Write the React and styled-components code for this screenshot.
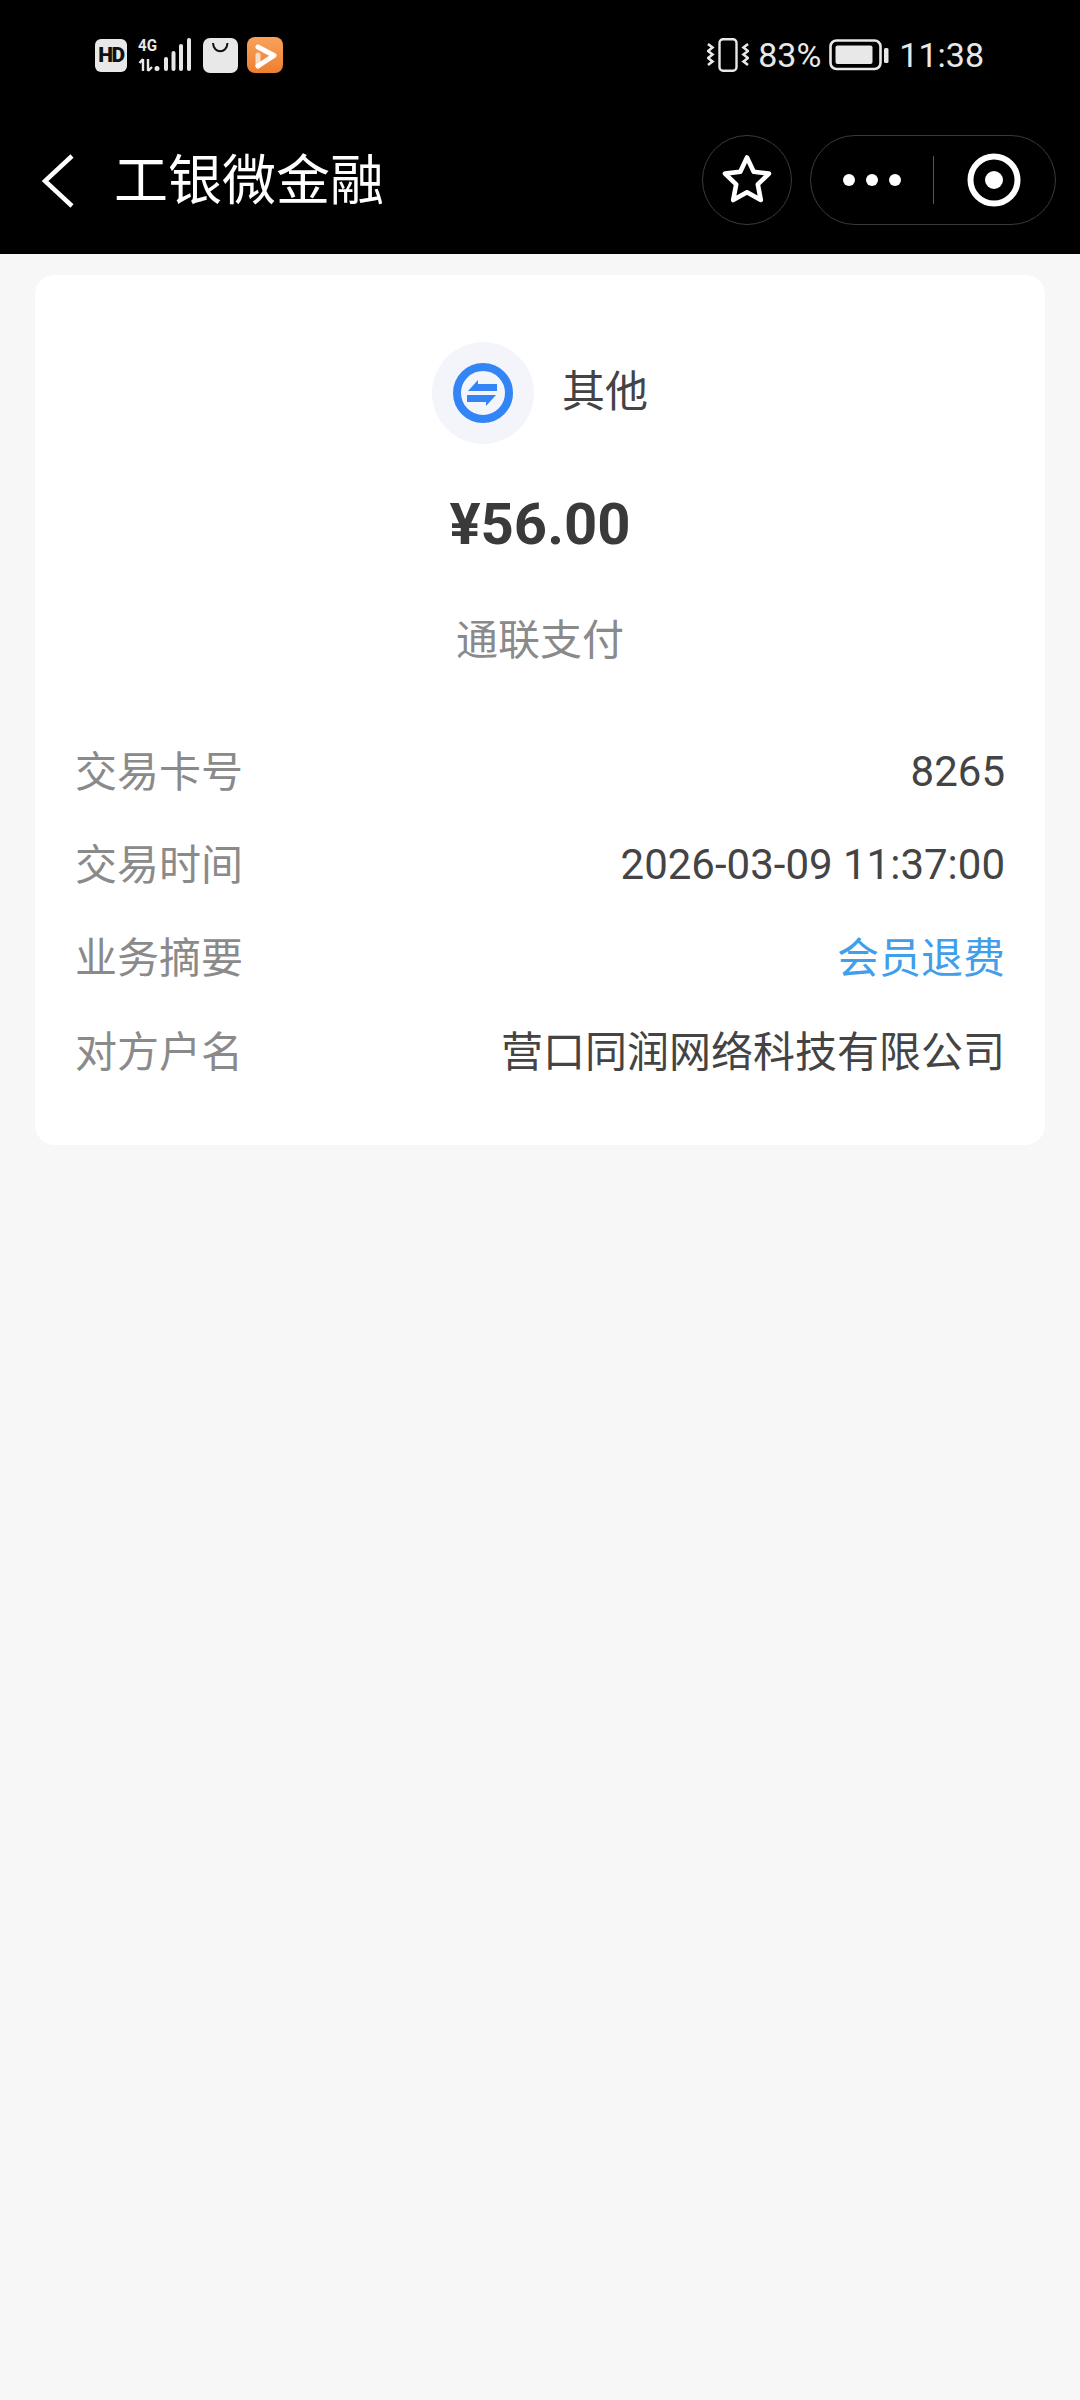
import React from "react";
import styled, { createGlobalStyle } from "styled-components";

const Global = createGlobalStyle`
  html, body { margin: 0; padding: 0; background: #f7f7f7; }
  body { font-family: Roboto, "Noto Sans CJK SC", sans-serif; }
`;

const Page = styled.div`
  width: 1080px;
  height: 2400px;
  background: #f7f7f7;
  overflow: hidden;
`;

const Header = styled.header`
  height: 254px;
  background: #000;
  display: flex;
  flex-direction: column;
`;

const StatusBar = styled.div`
  height: 110px;
  display: flex;
  align-items: center;
  justify-content: space-between;
  padding: 0 96px 0 95px;
  box-sizing: border-box;
`;

const LeftIcons = styled.div`
  display: flex;
  align-items: center;
  gap: 11px;
`;

const RightIcons = styled.div`
  display: flex;
  align-items: center;
`;

const HdBadge = styled.div`
  width: 32px;
  height: 33px;
  border-radius: 6px;
  background: #e8e8e8;
  color: #111;
  font: 900 21px/33px Roboto, sans-serif;
  letter-spacing: -1.5px;
  text-align: center;
`;

const StatusText = styled.span`
  color: #e8e8e8;
  font: 400 34px Roboto, sans-serif;
  line-height: 40px;
  margin: 0 ${(p) => p.$mr || 0}px 0 ${(p) => p.$ml || 0}px;
`;

const NavBar = styled.div`
  height: 144px;
  display: flex;
  align-items: center;
  padding: 0 24px 4px 40px;
  box-sizing: border-box;
`;

const Back = styled.svg`
  width: 36px;
  height: 56px;
  flex: none;
`;

const Title = styled.h1`
  margin: 0 0 6px 38px;
  flex: 1;
  color: #fff;
  font: 400 54px "Noto Sans CJK SC", sans-serif;
  line-height: 60px;
`;

const StarButton = styled.div`
  width: 90px;
  height: 90px;
  border-radius: 50%;
  border: 1px solid #3a3a3a;
  box-sizing: border-box;
  display: flex;
  align-items: center;
  justify-content: center;
  margin-right: 18px;
`;

const Capsule = styled.div`
  width: 246px;
  height: 90px;
  border-radius: 45px;
  border: 1px solid #3a3a3a;
  box-sizing: border-box;
  display: flex;
  align-items: center;
`;

const CapsuleCell = styled.div`
  flex: 1;
  height: 100%;
  display: flex;
  align-items: center;
  justify-content: center;
`;

const Divider = styled.div`
  width: 1px;
  height: 48px;
  background: #555;
`;

const Content = styled.main`
  padding: 21px 35px 0;
`;

const Card = styled.section`
  height: 870px;
  background: #fff;
  border-radius: 20px;
  box-sizing: border-box;
  padding: 67px 40px 0;
  display: flex;
  flex-direction: column;
`;

const Merchant = styled.div`
  display: flex;
  align-items: center;
  justify-content: center;
  gap: 28px;
`;

const IconCircle = styled.div`
  width: 102px;
  height: 102px;
  border-radius: 50%;
  background: #f3f5fa;
  display: flex;
  align-items: center;
  justify-content: center;
`;

const MerchantName = styled.span`
  color: #444;
  font: 400 43px "Noto Sans CJK SC", sans-serif;
  padding-bottom: 11px;
`;

const Amount = styled.div`
  margin-top: 46px;
  text-align: center;
  color: #3a3a3a;
  font: 700 58px/68px Roboto, sans-serif;
`;

const Channel = styled.div`
  margin-top: 54px;
  text-align: center;
  color: #8a8a8a;
  font: 400 42px/50px "Noto Sans CJK SC", sans-serif;
`;

const Rows = styled.div`
  margin-top: 59.5px;
  display: flex;
  flex-direction: column;
`;

const Row = styled.div`
  height: 93.4px;
  display: flex;
  align-items: center;
  justify-content: space-between;
`;

const Label = styled.span`
  color: #8a8a8a;
  font: 400 42px "Noto Sans CJK SC", sans-serif;
`;

const Value = styled.span`
  color: ${(p) => (p.$link ? "#409eea" : "#444")};
  font: 400 42px Roboto, "Noto Sans CJK SC", sans-serif;
  padding-top: ${(p) => (p.$numeric ? 6 : 0)}px;
`;

const SignalSvg = styled.svg`
  width: 54px;
  height: 40px;
  margin-top: -6px;
`;

const PlaySvg = styled.svg`
  width: 36px;
  height: 36px;
  margin-left: -2px;
`;

const rows = [
  { label: "交易卡号", value: "8265", numeric: true },
  { label: "交易时间", value: "2026-03-09 11:37:00", numeric: true },
  { label: "业务摘要", value: "会员退费", link: true },
  { label: "对方户名", value: "营口同润网络科技有限公司" },
];

const SignalIcon = () => (
  <SignalSvg viewBox="0 -6 54 40">
    <text x="0" y="13" fill="#e8e8e8" fontSize="17" fontWeight="700" fontFamily="Roboto, sans-serif" textLength="19" lengthAdjust="spacingAndGlyphs">4G</text>
    <path d="M5 21v12M5 21l-3.500 4M10 21v12M10 33l4-4" stroke="#e8e8e8" strokeWidth="2.400" fill="none" />
    <circle cx="19" cy="30.500" r="2.500" fill="#e8e8e8" />
    <rect x="26" y="19" width="4" height="14" rx="2" fill="#e8e8e8" />
    <rect x="33.500" y="13" width="4" height="20" rx="2" fill="#e8e8e8" />
    <rect x="41" y="6" width="4" height="27" rx="2" fill="#e8e8e8" />
    <rect x="49" y="0" width="4" height="33" rx="2" fill="#e8e8e8" />
  </SignalSvg>
);

const BagIcon = () => (
  <svg width="35" height="35" viewBox="0 0 35 35">
    <rect width="35" height="35" rx="7" fill="#e8e8e8" />
    <path d="M10 5c.5 11 14 11 14.500 0" stroke="#111" strokeWidth="2" fill="none" />
  </svg>
);

const PlayIcon = () => (
  <PlaySvg viewBox="0 0 36 36">
    <defs>
      <linearGradient id="pg" x1="0" y1="0" x2="0" y2="1">
        <stop offset="0" stopColor="#f9a25a" />
        <stop offset="1" stopColor="#ee7f30" />
      </linearGradient>
    </defs>
    <rect width="36" height="36" rx="8" fill="url(#pg)" />
    <path d="M11 18v11" stroke="#f7dcc6" strokeWidth="5" strokeLinecap="round" />
    <path d="M11 10l16 8.500-16 10.500" stroke="#fff" strokeWidth="5" strokeLinecap="round" strokeLinejoin="round" fill="none" />
  </PlaySvg>
);

const VibrateIcon = () => (
  <svg width="42" height="34" viewBox="0 0 42 34">
    <rect x="12.500" y="1.200" width="17" height="31.600" rx="3.500" stroke="#e8e8e8" strokeWidth="2.400" fill="none" />
    <path d="M1 6l4.500 3.500L1 13l4.500 3.500L1 20l4.500 3.500L1 27M41 6l-4.500 3.500L41 13l-4.500 3.500L41 20l-4.500 3.500L41 27" stroke="#e8e8e8" strokeWidth="2.600" fill="none" />
  </svg>
);

const BatteryIcon = () => (
  <svg width="60" height="32" viewBox="0 0 60 32">
    <rect x="1.500" y="1.500" width="50" height="28.500" rx="6" stroke="#e8e8e8" strokeWidth="2.600" fill="none" />
    <rect x="6.500" y="6.500" width="37" height="18.500" rx="2" fill="#e8e8e8" />
    <rect x="55" y="9" width="4.500" height="15" rx="1.500" fill="#e8e8e8" />
  </svg>
);

const StarIcon = () => (
  <svg width="52" height="52" viewBox="0 0 52 52">
    <path d="M26 3.500l6.700 14.300 15.300 1.800-11.200 10.700 3 15.700L26 38.200l-13.800 7.800 3-15.700L4 19.600l15.300-1.800z" stroke="#fff" strokeWidth="4.600" strokeLinejoin="round" fill="none" />
  </svg>
);

const DotsIcon = () => (
  <svg width="58" height="14" viewBox="0 0 58 14">
    <circle cx="6" cy="7" r="6" fill="#fff" />
    <circle cx="29" cy="7" r="6" fill="#fff" />
    <circle cx="52" cy="7" r="6" fill="#fff" />
  </svg>
);

const TargetIcon = () => (
  <svg width="54" height="54" viewBox="0 0 54 54">
    <circle cx="27" cy="27" r="23.500" stroke="#fff" strokeWidth="6" fill="none" />
    <circle cx="27" cy="27" r="9" fill="#fff" />
  </svg>
);

const TransferIcon = () => (
  <svg width="60" height="60" viewBox="0 0 60 60">
    <circle cx="30" cy="30" r="26" stroke="#3385f5" strokeWidth="8" fill="#f3f5fa" />
    <path d="M25 17v4h19v7H15z" fill="#3385f5" />
    <path d="M14 32h29L33 43v-4H14z" fill="#3385f5" />
  </svg>
);

export default function App() {
  return (
    <Page>
      <Global />
      <Header>
        <StatusBar>
          <LeftIcons>
            <HdBadge>HD</HdBadge>
            <SignalIcon />
            <BagIcon />
            <PlayIcon />
          </LeftIcons>
          <RightIcons>
            <VibrateIcon />
            <StatusText $ml={9} $mr={8}>83%</StatusText>
            <BatteryIcon />
            <StatusText $ml={10}>11:38</StatusText>
          </RightIcons>
        </StatusBar>
        <NavBar>
          <Back viewBox="0 0 36 56">
            <path d="M32 4L5 29l27 25" stroke="#fff" strokeWidth="4.500" fill="none" />
          </Back>
          <Title>工银微金融</Title>
          <StarButton>
            <StarIcon />
          </StarButton>
          <Capsule>
            <CapsuleCell>
              <DotsIcon />
            </CapsuleCell>
            <Divider />
            <CapsuleCell>
              <TargetIcon />
            </CapsuleCell>
          </Capsule>
        </NavBar>
      </Header>
      <Content>
        <Card>
          <Merchant>
            <IconCircle>
              <TransferIcon />
            </IconCircle>
            <MerchantName>其他</MerchantName>
          </Merchant>
          <Amount>¥56.00</Amount>
          <Channel>通联支付</Channel>
          <Rows>
            {rows.map((r) => (
              <Row key={r.label}>
                <Label>{r.label}</Label>
                <Value $link={r.link} $numeric={r.numeric}>{r.value}</Value>
              </Row>
            ))}
          </Rows>
        </Card>
      </Content>
    </Page>
  );
}
